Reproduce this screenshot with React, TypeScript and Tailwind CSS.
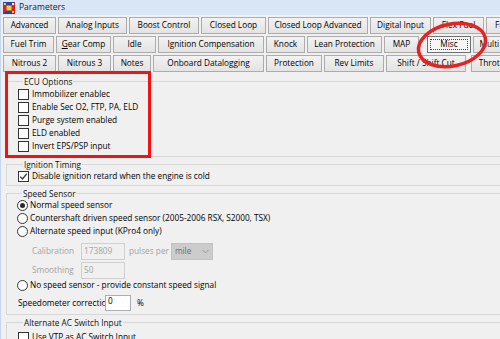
import React from 'react'

const font = { fontFamily: '"Open Sans", "Noto Sans", sans-serif' }

type Tab = { label: React.ReactNode; cls: string; active?: boolean }

const row1: Tab[] = [
  { label: 'Advanced', cls: 'w-[53px]' },
  { label: 'Analog Inputs', cls: 'w-[69px]' },
  { label: 'Boost Control', cls: 'w-[70px]' },
  { label: 'Closed Loop', cls: 'w-[65px]' },
  { label: 'Closed Loop Advanced', cls: 'w-[100px]' },
  { label: 'Digital Input', cls: 'w-[61px]' },
  { label: 'Flex Fuel', cls: 'w-[51px]' },
  { label: 'Fuel', cls: 'w-[34px]' },
]

const row2: Tab[] = [
  { label: 'Fuel Trim', cls: 'w-[51px]' },
  { label: <><span className="underline">G</span>ear Comp</>, cls: 'w-[55px]' },
  { label: 'Idle', cls: 'w-[43px]' },
  { label: 'Ignition Compensation', cls: 'w-[106px]' },
  { label: 'Knock', cls: 'w-[39px]' },
  { label: 'Lean Protection', cls: 'w-[75px]' },
  { label: 'MAP', cls: 'w-[35px]' },
  { label: 'Misc', cls: 'w-[44px] ml-[6px]', active: true },
  { label: 'Multi Map', cls: 'w-[52px]' },
]

const row3: Tab[] = [
  { label: 'Nitrous 2', cls: 'w-[53px]' },
  { label: 'Nitrous 3', cls: 'w-[53px]' },
  { label: 'Notes', cls: 'w-[38px]' },
  { label: 'Onboard Datalogging', cls: 'w-[111px]' },
  { label: 'Protection', cls: 'w-[56px]' },
  { label: 'Rev Limits', cls: 'w-[60px]' },
  { label: 'Shift / Shift Cut', cls: 'w-[80px]' },
  { label: 'Throttle', cls: 'w-[46px] ml-[3px]' },
]

function TabButton({ tab }: { tab: Tab }) {
  if (tab.active) {
    return (
      <div className={`${tab.cls} shrink-0 h-[17px] border border-[#6f6f6f] bg-[#f6f6f6] p-[2px]`}>
        <div className="h-full border border-dotted border-[#444] flex items-center justify-center whitespace-nowrap">
          {tab.label}
        </div>
      </div>
    )
  }
  return (
    <div className={`${tab.cls} shrink-0 h-[17px] border border-[#acacac] bg-linear-to-b from-[#f2f2f2] to-[#e3e3e3] flex items-center justify-center whitespace-nowrap overflow-hidden`}>
      {tab.label}
    </div>
  )
}

function Check({ checked, label }: { checked?: boolean; label: string }) {
  return (
    <div className="h-[13px] flex items-center gap-[3px] whitespace-nowrap">
      <span className="w-[11px] h-[11px] border border-[#333] bg-white shrink-0 flex items-center justify-center">
        {checked && (
          <svg width="9" height="9" viewBox="0 0 9 9">
            <path d="M1.2 4.6 L3.5 7 L7.8 1.6" fill="none" stroke="#333" strokeWidth="1.3" />
          </svg>
        )}
      </span>
      <span>{label}</span>
    </div>
  )
}

function Radio({ checked, label }: { checked?: boolean; label: string }) {
  return (
    <div className="h-[13px] flex items-center gap-[2px] whitespace-nowrap">
      <span className="w-[11px] h-[11px] rounded-full border border-[#333] bg-white shrink-0 flex items-center justify-center">
        {checked && <span className="w-[5px] h-[5px] rounded-full bg-[#2a2a2a]" />}
      </span>
      <span>{label}</span>
    </div>
  )
}

function Group({ title, className, children }: { title: string; className?: string; children: React.ReactNode }) {
  return (
    <fieldset className={`ml-[5px] w-[560px] border border-[#d7d7d7] ${className ?? ''}`}>
      <legend className="ml-[5px] px-[1px] leading-[11px] text-[#111]">{title}</legend>
      {children}
    </fieldset>
  )
}

export default function App() {
  return (
    <div className="relative w-[500px] h-[339px] overflow-hidden bg-[#f0f0f0] text-[8.25px] text-black border-l border-[#c6d7ec]" style={font}>
      {/* title bar */}
      <div className="h-[15px] bg-[#d9e6f5] flex items-center pl-[2px] gap-[4px]">
        <svg width="12" height="12" viewBox="0 0 12 12">
          <rect x="0" y="0" width="12" height="12" fill="#2a3fb0" />
          <path d="M0 0 L6 6 L0 12 Z" fill="#e02020" />
          <path d="M12 0 L6 6 L12 12 Z" fill="#e02020" />
          <rect x="3.5" y="3.5" width="5" height="5" fill="#f4d020" />
          <rect x="1" y="1" width="2" height="2" fill="#f4d020" />
          <rect x="9" y="9" width="2" height="2" fill="#f4d020" />
          <rect x="9" y="1" width="2" height="2" fill="#ffffff" />
        </svg>
        <span className="text-[8.5px] text-[#1a1a1a]">Parameters</span>
      </div>

      {/* tab buttons */}
      <div className="pt-[2px] pl-[2px] flex flex-col gap-[2px]">
        {[row1, row2, row3].map((row, i) => (
          <div key={i} className="flex gap-[2px]">
            {row.map((t, j) => <TabButton key={j} tab={t} />)}
          </div>
        ))}
      </div>

      {/* groups */}
      <Group title="ECU Options" className="mt-[4px] pl-[11px] pt-[1px] pb-[3px]">
        <Check label="Immobilizer enablec" />
        <Check label="Enable Sec O2, FTP, PA, ELD" />
        <Check label="Purge system enabled" />
        <Check label="ELD enabled" />
        <Check label="Invert EPS/PSP input" />
      </Group>

      <Group title="Ignition Timing" className="mt-[2px] pl-[11px] pb-[2px]">
        <Check checked label="Disable ignition retard when the engine is cold" />
      </Group>

      <Group title="Speed Sensor" className="mt-[2px] pl-[10px] pb-[3px]">
        <Radio checked label="Normal speed sensor" />
        <Radio label="Countershaft driven speed sensor (2005-2006 RSX, S2000, TSX)" />
        <Radio label="Alternate speed input (KPro4 only)" />
        <div className="mt-[5px] flex items-center text-[#a3a3a3]">
          <span className="w-[64px] pl-[15px]">Calibration</span>
          <div className="w-[44px] h-[17px] border border-[#cfcfcf] pl-[2px] flex items-center">173809</div>
          <span className="ml-[4px]">pulses per</span>
          <div className="ml-[2px] w-[42px] h-[17px] bg-[#cccccc] border border-[#c2c2c2] pl-[3px] flex items-center justify-between text-[#6e6e6e]">
            <span>mile</span>
            <svg width="7" height="5" viewBox="0 0 7 5" className="mr-[3px]">
              <path d="M0.5 1 L3.5 4 L6.5 1" fill="none" stroke="#9a9a9a" strokeWidth="1" />
            </svg>
          </div>
        </div>
        <div className="mt-[2px] flex items-center text-[#a3a3a3]">
          <span className="w-[64px] pl-[15px]">Smoothing</span>
          <div className="w-[44px] h-[17px] border border-[#cfcfcf] pl-[2px] flex items-center">50</div>
        </div>
        <Radio label="No speed sensor - provide constant speed signal" />
        <div className="mt-[3px] flex items-center">
          <span className="w-[88px] pl-[1px] overflow-hidden whitespace-nowrap">Speedometer correction</span>
          <div className="w-[26px] h-[16px] bg-white border border-[#abadb3] pl-[2px] leading-[10px]">0</div>
          <span className="ml-[6px]">%</span>
        </div>
      </Group>

      <Group title="Alternate AC Switch Input" className="mt-[2px] pl-[11px] pt-[3px]">
        <Check label="Use VTP as AC Switch Input" />
      </Group>

      {/* red annotations */}
      <svg className="absolute inset-0 pointer-events-none" width="500" height="339">
        <rect x="5.5" y="72.5" width="143" height="84" fill="none" stroke="#f31212" strokeWidth="3" />
        <ellipse cx="451" cy="45" rx="34" ry="21" transform="rotate(-12 451 45)" fill="none" stroke="#e62222" strokeWidth="3.5" />
      </svg>
    </div>
  )
}
